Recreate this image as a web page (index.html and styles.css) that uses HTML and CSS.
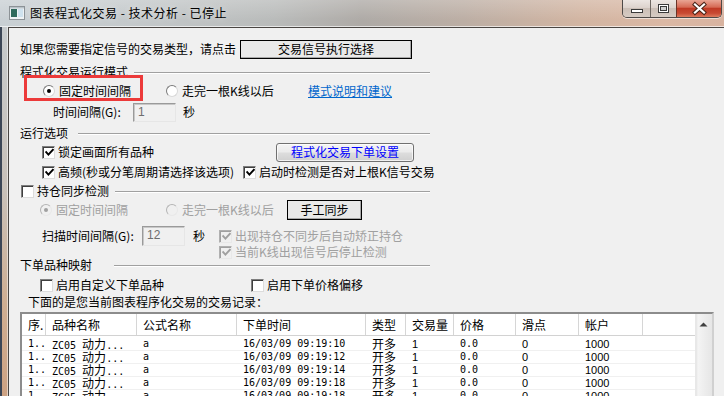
FILE: index.html
```html
<!DOCTYPE html>
<html lang="zh-CN">
<head>
<meta charset="utf-8">
<title>图表程式化交易</title>
<link rel="stylesheet" href="styles.css">
</head>
<body>
<div class="window">
  <div class="titlebar">
    <svg class="appicon" width="16" height="14" viewBox="0 0 16 14">
      <rect x="0.5" y="0.5" width="15" height="13" fill="#eef2f4" stroke="#8c9296"/>
      <rect x="2" y="3" width="6" height="8" fill="#2e6a5c"/>
      <rect x="9" y="3" width="5" height="8" fill="#cfe2ee"/>
      <rect x="1" y="1" width="14" height="1.5" fill="#b8c2c8"/>
    </svg>
    <span class="title">图表程式化交易 - 技术分析 - 已停止</span>
    <div class="caps">
      <div class="cbtn min">
        <svg width="27" height="17" viewBox="0 0 27 17"><rect x="8.5" y="9.5" width="11" height="3" fill="#fff" stroke="#3a3a3a"/></svg>
      </div>
      <div class="cbtn max">
        <svg width="25" height="17" viewBox="0 0 25 17"><rect x="7.5" y="4.5" width="10" height="8" fill="#fff" stroke="#3a3a3a"/><rect x="9.5" y="6.5" width="6" height="4" fill="#cfcfcf" stroke="#3a3a3a"/></svg>
      </div>
      <div class="cbtn close">
        <svg width="44" height="17" viewBox="0 0 44 17"><path d="M18 4.5 L27 12.5 M27 4.5 L18 12.5" stroke="#4a2418" stroke-width="4.2" stroke-linecap="square"/><path d="M18 4.5 L27 12.5 M27 4.5 L18 12.5" stroke="#fff" stroke-width="2.2" stroke-linecap="square"/></svg>
      </div>
    </div>
  </div>
  <div class="body">
    <div class="frame"></div>
    <div class="client">
      <div class="row r1">
        <span class="w-r1">如果您需要指定信号的交易类型，请点击</span>
        <span class="btn classic btn-signal">交易信号执行选择</span>
      </div>

      <div class="row group r2">
        <span class="glabel w-g1">程式化交易运行模式</span>
        <span class="gline"></span>
      </div>

      <div class="row r3">
        <span class="item w-r3a"><span class="rb on"></span><span>固定时间间隔</span></span>
        <span class="item w-r3b"><span class="rb"></span><span>走完一根K线以后</span></span>
        <span class="link">模式说明和建议</span>
      </div>

      <div class="row r4">
        <span class="w-r4">时间间隔(G):</span>
        <span class="edit e1">1</span>
        <span class="sec">秒</span>
      </div>

      <div class="row group r5">
        <span class="glabel w-g2">运行选项</span>
        <span class="gline"></span>
      </div>

      <div class="row r6">
        <span class="item w-r6"><span class="cb on"><svg width="9" height="9" viewBox="0 0 9 9"><path d="M1.2 4.2 L3.4 6.6 L7.8 1.8"/></svg></span><span>锁定画面所有品种</span></span>
        <span class="btn themed btn-order">程式化交易下单设置</span>
      </div>

      <div class="row r7">
        <span class="item w-r7"><span class="cb on"><svg width="9" height="9" viewBox="0 0 9 9"><path d="M1.2 4.2 L3.4 6.6 L7.8 1.8"/></svg></span><span>高频(秒或分笔周期请选择该选项)</span></span>
        <span class="item"><span class="cb on"><svg width="9" height="9" viewBox="0 0 9 9"><path d="M1.2 4.2 L3.4 6.6 L7.8 1.8"/></svg></span><span>启动时检测是否对上根K信号交易</span></span>
      </div>

      <div class="row group r8">
        <span class="item glabel w-g3"><span class="cb"></span><span>持仓同步检测</span></span>
        <span class="gline"></span>
      </div>

      <div class="row r9 dis">
        <span class="item w-r9a"><span class="rb on"></span><span>固定时间间隔</span></span>
        <span class="item w-r9b"><span class="rb"></span><span>走完一根K线以后</span></span>
        <span class="btn classic btn-sync">手工同步</span>
      </div>

      <div class="row r10">
        <span class="w-r10">扫描时间间隔(G):</span>
        <span class="edit e2">12</span>
        <span class="sec sec2">秒</span>
        <span class="item dis"><span class="cb on"><svg width="9" height="9" viewBox="0 0 9 9"><path d="M1.2 4.2 L3.4 6.6 L7.8 1.8"/></svg></span><span>出现持仓不同步后自动矫正持仓</span></span>
      </div>

      <div class="row r11">
        <span class="item dis"><span class="cb on"><svg width="9" height="9" viewBox="0 0 9 9"><path d="M1.2 4.2 L3.4 6.6 L7.8 1.8"/></svg></span><span>当前K线出现信号后停止检测</span></span>
      </div>

      <div class="row group r12">
        <span class="glabel w-g4">下单品种映射</span>
        <span class="gline"></span>
      </div>

      <div class="row r13">
        <span class="item w-r13"><span class="cb"></span><span>启用自定义下单品种</span></span>
        <span class="item"><span class="cb"></span><span>启用下单价格偏移</span></span>
      </div>

      <div class="row r14">
        <span>下面的是您当前图表程序化交易的交易记录：</span>
      </div>

      <div class="lv">
        <div class="lv-main">
          <div class="lv-head">
            <span>序.</span><span>品种名称</span><span>公式名称</span><span>下单时间</span><span>类型</span><span>交易量</span><span>价格</span><span>滑点</span><span>帐户</span><span class="last"></span>
          </div>
          <div class="lv-body">
            <div class="lv-row"><span class="m">1..</span><span class="m">ZC05 <span class="cjk">动力</span>...</span><span class="m">a</span><span class="m">16/03/09 09:19:10</span><span>开多</span><span class="s">1</span><span class="m">0.0</span><span class="s">0</span><span class="s">1000</span><span></span></div>
            <div class="lv-row"><span class="m">1..</span><span class="m">ZC05 <span class="cjk">动力</span>...</span><span class="m">a</span><span class="m">16/03/09 09:19:12</span><span>开多</span><span class="s">1</span><span class="m">0.0</span><span class="s">0</span><span class="s">1000</span><span></span></div>
            <div class="lv-row"><span class="m">1..</span><span class="m">ZC05 <span class="cjk">动力</span>...</span><span class="m">a</span><span class="m">16/03/09 09:19:14</span><span>开多</span><span class="s">1</span><span class="m">0.0</span><span class="s">0</span><span class="s">1000</span><span></span></div>
            <div class="lv-row"><span class="m">1..</span><span class="m">ZC05 <span class="cjk">动力</span>...</span><span class="m">a</span><span class="m">16/03/09 09:19:18</span><span>开多</span><span class="s">1</span><span class="m">0.0</span><span class="s">0</span><span class="s">1000</span><span></span></div>
            <div class="lv-row"><span class="m">1..</span><span class="m">ZC05 <span class="cjk">动力</span>...</span><span class="m">a</span><span class="m">16/03/09 09:19:18</span><span>开多</span><span class="s">1</span><span class="m">0.0</span><span class="s">0</span><span class="s">1000</span><span></span></div>
          </div>
        </div>
        <div class="vscroll">
          <svg class="uparrow" width="9" height="5" viewBox="0 0 9 5"><path d="M0.5 4.5 L4.5 0.5 L8.5 4.5 Z" fill="#404040"/></svg>
        </div>
      </div>
    </div>
  </div>
  <div class="highlight"></div>
</div>
</body>
</html>
```

FILE: styles.css
```css
* { box-sizing: border-box; margin: 0; padding: 0; }

html, body {
  width: 724px;
  height: 396px;
  overflow: hidden;
  background: #f0f0f0;
}

body {
  font-family: "Noto Sans CJK SC", "Liberation Sans", sans-serif;
  font-size: 12px;
  line-height: 14px;
  color: #000;
}

.window {
  position: relative;
  width: 724px;
  height: 396px;
  overflow: hidden;
  display: flex;
  flex-direction: column;
}

/* ---------- title bar ---------- */
.titlebar {
  height: 27px;
  flex: none;
  display: flex;
  align-items: flex-start;
  background:
    linear-gradient(180deg, rgba(255,255,255,0.22), rgba(255,255,255,0) 75%),
    linear-gradient(90deg, #c9d0d4 0%, #c4c9cb 18%, #b9bbba 38%, #aeaaa6 50%, #bcaea4 64%, #d2b5a2 80%, #dbb8a4 92%, #d8b3a0 100%);
  box-shadow: inset 0 -1px 0 rgba(255,255,255,0.65);
}

.appicon { margin: 6px 0 0 9px; flex: none; }

.title {
  margin: 5px 0 0 5px;
  font-size: 12px;
  line-height: 16px;
  letter-spacing: 0.5px;
  color: #000;
  text-shadow: 0 0 6px rgba(255,255,255,0.6);
  white-space: nowrap;
}

.caps {
  margin-left: auto;
  margin-right: 2px;
  display: flex;
  height: 18px;
  border: 1px solid #4e4a48;
  border-top: none;
  border-radius: 0 0 5px 5px;
  overflow: hidden;
  box-shadow: 0 1px 0 rgba(255,255,255,0.55);
}

.cbtn {
  height: 17px;
  display: flex;
  align-items: center;
  justify-content: center;
  background: linear-gradient(180deg, #ece6e2 0%, #ddd3cd 45%, #cbbfb7 50%, #d6cbc3 100%);
}
.cbtn.min { width: 27px; }
.cbtn.max { width: 26px; border-left: 1px solid #6e6762; }
.cbtn.close {
  width: 45px;
  border-left: 1px solid #6b3428;
  background: linear-gradient(180deg, #e9a594 0%, #d66a55 42%, #c03a25 50%, #c84a33 78%, #dd7c5e 100%);
}

/* ---------- body ---------- */
.body { flex: 1; display: flex; min-height: 0; }

.frame {
  width: 8px;
  flex: none;
  background:
    linear-gradient(90deg, #3c4656 0, #3c4656 2px, transparent 2px, transparent 7px, rgba(255,255,255,0.5) 7px),
    linear-gradient(180deg, #c6cacc 0%, #c8c0b8 45%, #cfae92 75%, #cda283 100%);
}

.client {
  flex: 1;
  border-left: 1px solid #4a4643;
  border-top: 1px solid #4a4643;
  background: #f0f0f0;
  padding-left: 11px;
  display: flex;
  flex-direction: column;
  min-height: 0;
}

.row {
  display: flex;
  align-items: center;
  white-space: nowrap;
  flex: none;
  width: 410px;
}
.row > span { flex: none; }

.item { display: flex; align-items: center; gap: 3px; }
.item .rb { margin-right: 1px; }

/* row geometry */
.r1 { height: 20px; margin-top: 11px; }
.r2 { height: 16px; margin-top: 5px; }
.r3 { height: 18px; margin-top: 2px; padding-left: 23px; }
.r4 { height: 20px; margin-top: 2px; padding-left: 33px; }
.r5 { height: 16px; margin-top: 3px; }
.r6 { height: 20px; margin-top: 1px; padding-left: 22px; }
.r7 { height: 18px; margin-top: 1px; padding-left: 22px; width: 460px; }
.r8 { height: 16px; margin-top: 2px; padding-left: 1px; }
.r9 { height: 21px; margin-top: 0; padding-left: 20px; }
.r10 { height: 20px; margin-top: 6px; padding-left: 22px; width: 460px; }
.r11 { height: 12px; margin-top: 0; padding-left: 199px; }
.r12 { height: 14px; margin-top: 0; }
.r13 { height: 16px; margin-top: 5px; padding-left: 20px; }
.r14 { height: 16px; margin-top: 1px; padding-left: 8px; }

.w-r1 { width: 220px; }
.w-g1 { width: 114px; }
.w-g2 { width: 58px; }
.w-g3 { width: 94px; }
.w-g4 { width: 94px; }
.w-r3a { width: 123px; }
.w-r3b { width: 142px; }
.w-r4 { width: 80px; }
.w-r6 { width: 234px; }
.w-r7 { width: 201px; }
.w-r9a { width: 126px; }
.w-r9b { width: 121px; }
.w-r10 { width: 100px; }
.w-r13 { width: 211px; }

/* group separator */
.gline {
  flex: 1 1 auto !important;
  height: 2px;
  margin-top: 1px;
  border-top: 1px solid #a0a0a0;
  border-bottom: 1px solid #ffffff;
}

/* buttons */
.btn {
  display: flex;
  align-items: center;
  justify-content: center;
  font-size: 12px;
  line-height: 14px;
}
.btn.classic {
  background: #e9e9e9;
  border: 1px solid;
  box-shadow: inset -1px -1px 0 #a8a8a8;
}
.btn-signal { width: 172px; height: 19px; border-color: #f6f6f6 #696969 #696969 #f6f6f6; }
.btn-sync { width: 75px; height: 20px; border-color: #f6f6f6 #3c3c3c #3c3c3c #f6f6f6; box-shadow: inset -1px -1px 0 #a0a0a0; }
.btn.themed {
  width: 138px;
  height: 19px;
  border: 1px solid #707070;
  border-radius: 3px;
  background: linear-gradient(180deg, #f4f4f4 0%, #ebebeb 48%, #dddddd 52%, #d0d0d0 100%);
  box-shadow: inset 0 0 0 1px rgba(255,255,255,0.7);
  color: #0000ff;
}

.link { color: #0066cc; text-decoration: underline; }

/* edit boxes */
.edit {
  height: 19px;
  background: #f0f0f0;
  border: 1px solid;
  border-color: #9a9a9a #e6e6e6 #e6e6e6 #9a9a9a;
  box-shadow: inset 1px 1px 0 #c8c8c8;
  font-family: "Liberation Sans", sans-serif;
  font-size: 12px;
  line-height: 16px;
  color: #6d6d6d;
  padding-left: 4px;
}
.e1 { width: 43px; }
.e2 { width: 43px; height: 20px; line-height: 17px; }
.sec { margin-left: 7px; }
.sec2 { margin-left: 8px; width: 26px; }

/* checkbox */
.cb {
  width: 13px;
  height: 13px;
  flex: none;
  display: flex;
  align-items: center;
  justify-content: center;
  background: #fff;
  border: 1px solid;
  border-color: #7e7e7e #dcdcdc #dcdcdc #7e7e7e;
  box-shadow: inset 1px 1px 0 #3f3f3f;
}
.cb svg { margin: 1px 0 0 1px; }
.cb path { fill: none; stroke: #000; stroke-width: 1.9; stroke-linecap: square; }
.dis { color: #a0a0a0; }
.dis .cb { background: #f0f0f0; border-color: #b0b0b0 #e8e8e8 #e8e8e8 #b0b0b0; box-shadow: inset 1px 1px 0 #a0a0a0; }
.dis .cb path { stroke: #a0a0a0; }

/* radio */
.rb {
  width: 12px;
  height: 12px;
  flex: none;
  border-radius: 50%;
  border: 1px solid;
  border-color: #7a7a7a #d8d8d8 #d8d8d8 #7a7a7a;
  background: #fff;
  display: flex;
  align-items: center;
  justify-content: center;
}
.rb.on::after {
  content: "";
  width: 4px;
  height: 4px;
  border-radius: 50%;
  background: #000;
}
.r9 .rb { background: #f0f0f0; border-color: #b4b4b4 #e8e8e8 #e8e8e8 #b4b4b4; }
.r9 .rb.on::after { background: #a0a0a0; }
.r9.dis .btn-sync { color: #000; }

/* ---------- list view ---------- */
.lv {
  margin-top: 2px;
  width: 694px;
  flex: 1;
  display: flex;
  background: #fff;
  border-top: 2px solid #8c8c8c;
  border-left: 2px solid #8c8c8c;
  border-right: 2px solid #d0d0d0;
  overflow: hidden;
}
.lv-main { width: 673px; flex: none; }

.lv-head, .lv-row {
  display: grid;
  grid-template-columns: 24px 91px 100px 129px 40px 48px 62px 63px 64px 52px;
}
.lv-head {
  height: 22px;
  border-bottom: 1px solid #d2d2d2;
  background: #fff;
}
.lv-head span {
  border-right: 1px solid #d6d6d6;
  line-height: 21px;
  padding-left: 6px;
  white-space: nowrap;
  overflow: hidden;
}
.lv-head span.last { border-right: none; }

.lv-body { padding-top: 2px; }
.lv-row {
  height: 13px;
  border-bottom: 1px solid #f0f0f0;
}
.lv-row > span {
  padding-left: 6px;
  line-height: 12px;
  white-space: nowrap;
  overflow: visible;
}
.m { font-family: "DejaVu Sans Mono", "Liberation Mono", monospace; font-size: 10px; }
.cjk { font-family: "Noto Sans CJK SC", sans-serif; font-size: 12px; line-height: 12px; }
.s { font-family: "Liberation Sans", sans-serif; font-size: 11px; }

.vscroll {
  width: 17px;
  flex: none;
  background: linear-gradient(90deg, #e4e4e4 0, #f4f4f4 2px, #ececec 60%, #e6e6e6 100%);
  border-left: 1px solid #e8e8e8;
  position: relative;
}
.uparrow { position: absolute; left: 3px; top: 8px; }

/* red annotation box over the dialog */
.highlight {
  position: absolute;
  left: 24px;
  top: 75px;
  width: 119px;
  height: 26px;
  border: 3px solid #ec3a3a;
}
```
